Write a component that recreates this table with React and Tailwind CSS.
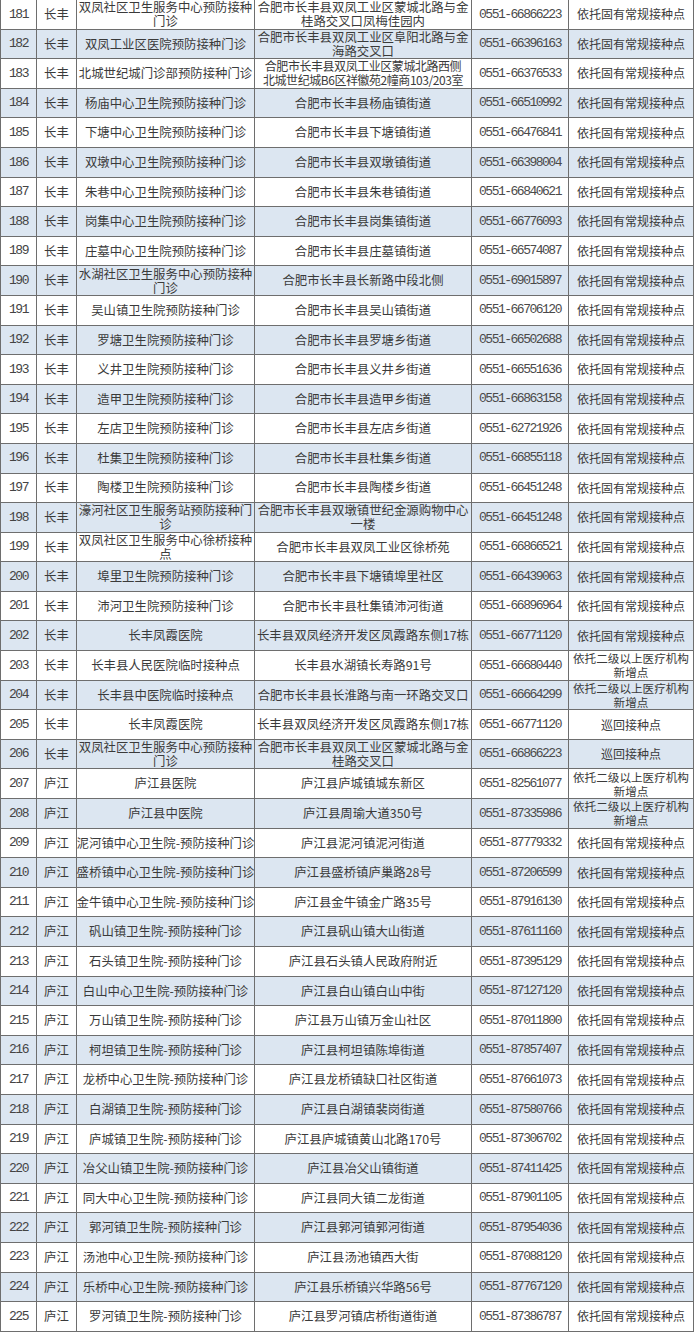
import React from 'react';

const T1 = '依托固有常规接种点';
const T2 = ['依托二级以上医疗机构', '新增点'];
const T3 = '巡回接种点';

const rows = [
    [181, '长丰', ['双凤社区卫生服务中心预防接种', '门诊'], ['合肥市长丰县双凤工业区蒙城北路与金', '桂路交叉口凤梅佳园内'], '0551-66866223', T1],
    [182, '长丰', '双凤工业区医院预防接种门诊', ['合肥市长丰县双凤工业区阜阳北路与金', '海路交叉口'], '0551-66396163', T1],
    [183, '长丰', '北城世纪城门诊部预防接种门诊', ['合肥市长丰县双凤工业区蒙城北路西侧', '北城世纪城B6区祥徽苑2幢商103/203室'], '0551-66376533', T1],
    [184, '长丰', '杨庙中心卫生院预防接种门诊', '合肥市长丰县杨庙镇街道', '0551-66510992', T1],
    [185, '长丰', '下塘中心卫生院预防接种门诊', '合肥市长丰县下塘镇街道', '0551-66476841', T1],
    [186, '长丰', '双墩中心卫生院预防接种门诊', '合肥市长丰县双墩镇街道', '0551-66398004', T1],
    [187, '长丰', '朱巷中心卫生院预防接种门诊', '合肥市长丰县朱巷镇街道', '0551-66840621', T1],
    [188, '长丰', '岗集中心卫生院预防接种门诊', '合肥市长丰县岗集镇街道', '0551-66776093', T1],
    [189, '长丰', '庄墓中心卫生院预防接种门诊', '合肥市长丰县庄墓镇街道', '0551-66574087', T1],
    [190, '长丰', ['水湖社区卫生服务中心预防接种', '门诊'], '合肥市长丰县长新路中段北侧', '0551-69015897', T1],
    [191, '长丰', '吴山镇卫生院预防接种门诊', '合肥市长丰县吴山镇街道', '0551-66706120', T1],
    [192, '长丰', '罗塘卫生院预防接种门诊', '合肥市长丰县罗塘乡街道', '0551-66502688', T1],
    [193, '长丰', '义井卫生院预防接种门诊', '合肥市长丰县义井乡街道', '0551-66551636', T1],
    [194, '长丰', '造甲卫生院预防接种门诊', '合肥市长丰县造甲乡街道', '0551-66863158', T1],
    [195, '长丰', '左店卫生院预防接种门诊', '合肥市长丰县左店乡街道', '0551-62721926', T1],
    [196, '长丰', '杜集卫生院预防接种门诊', '合肥市长丰县杜集乡街道', '0551-66855118', T1],
    [197, '长丰', '陶楼卫生院预防接种门诊', '合肥市长丰县陶楼乡街道', '0551-66451248', T1],
    [198, '长丰', ['濠河社区卫生服务站预防接种门', '诊'], ['合肥市长丰县双墩镇世纪金源购物中心', '一楼'], '0551-66451248', T1],
    [199, '长丰', ['双凤社区卫生服务中心徐桥接种', '点'], '合肥市长丰县双凤工业区徐桥苑', '0551-66866521', T1],
    [200, '长丰', '埠里卫生院预防接种门诊', '合肥市长丰县下塘镇埠里社区', '0551-66439063', T1],
    [201, '长丰', '沛河卫生院预防接种门诊', '合肥市长丰县杜集镇沛河街道', '0551-66896964', T1],
    [202, '长丰', '长丰凤霞医院', '长丰县双凤经济开发区凤霞路东侧17栋', '0551-66771120', T1],
    [203, '长丰', '长丰县人民医院临时接种点', '长丰县水湖镇长寿路91号', '0551-66680440', T2],
    [204, '长丰', '长丰县中医院临时接种点', '合肥市长丰县长淮路与南一环路交叉口', '0551-66664299', T2],
    [205, '长丰', '长丰凤霞医院', '长丰县双凤经济开发区凤霞路东侧17栋', '0551-66771120', T3],
    [206, '长丰', ['双凤社区卫生服务中心预防接种', '门诊'], ['合肥市长丰县双凤工业区蒙城北路与金', '桂路交叉口'], '0551-66866223', T3],
    [207, '庐江', '庐江县医院', '庐江县庐城镇城东新区', '0551-82561077', T2],
    [208, '庐江', '庐江县中医院', '庐江县周瑜大道350号', '0551-87335986', T2],
    [209, '庐江', '泥河镇中心卫生院-预防接种门诊', '庐江县泥河镇泥河街道', '0551-87779332', T1],
    [210, '庐江', '盛桥镇中心卫生院-预防接种门诊', '庐江县盛桥镇庐巢路28号', '0551-87206599', T1],
    [211, '庐江', '金牛镇中心卫生院-预防接种门诊', '庐江县金牛镇金广路35号', '0551-87916130', T1],
    [212, '庐江', '矾山镇卫生院-预防接种门诊', '庐江县矾山镇大山街道', '0551-87611160', T1],
    [213, '庐江', '石头镇卫生院-预防接种门诊', '庐江县石头镇人民政府附近', '0551-87395129', T1],
    [214, '庐江', '白山中心卫生院-预防接种门诊', '庐江县白山镇白山中街', '0551-87127120', T1],
    [215, '庐江', '万山镇卫生院-预防接种门诊', '庐江县万山镇万金山社区', '0551-87011800', T1],
    [216, '庐江', '柯坦镇卫生院-预防接种门诊', '庐江县柯坦镇陈埠街道', '0551-87857407', T1],
    [217, '庐江', '龙桥中心卫生院-预防接种门诊', '庐江县龙桥镇缺口社区街道', '0551-87661073', T1],
    [218, '庐江', '白湖镇卫生院-预防接种门诊', '庐江县白湖镇裴岗街道', '0551-87580766', T1],
    [219, '庐江', '庐城镇卫生院-预防接种门诊', '庐江县庐城镇黄山北路170号', '0551-87306702', T1],
    [220, '庐江', '冶父山镇卫生院-预防接种门诊', '庐江县冶父山镇街道', '0551-87411425', T1],
    [221, '庐江', '同大中心卫生院-预防接种门诊', '庐江县同大镇二龙街道', '0551-87901105', T1],
    [222, '庐江', '郭河镇卫生院-预防接种门诊', '庐江县郭河镇郭河街道', '0551-87954036', T1],
    [223, '庐江', '汤池中心卫生院-预防接种门诊', '庐江县汤池镇西大街', '0551-87088120', T1],
    [224, '庐江', '乐桥中心卫生院-预防接种门诊', '庐江县乐桥镇兴华路56号', '0551-87767120', T1],
    [225, '庐江', '罗河镇卫生院-预防接种门诊', '庐江县罗河镇店桥街道街道', '0551-87386787', T1],
];

// a string is one line, an array is lines broken as in the sheet
const Cell = ({ value, lineClass = '' }) => (
    <div className="flex flex-col items-center justify-center border-r border-[#6e6e6e]">
        {Array.isArray(value)
            ? value.map((line, i) => (
                  <div key={i} className={`whitespace-nowrap leading-[14px] ${lineClass}`}>{line}</div>
              ))
            : <div className={`whitespace-nowrap ${lineClass}`}>{value}</div>}
    </div>
);

export default function App() {
    return (
        <div className="w-[695px] h-[1333px] bg-white overflow-hidden text-[#3a3a3a] font-['Noto_Sans_CJK_SC',sans-serif]">
            <div className="border-l border-[#6e6e6e] w-[694px]">
                {rows.map(([num, area, name, addr, phone, kind]) => (
                    <div
                        key={num}
                        className={`grid grid-cols-[36px_40px_178px_217px_97px_125px] h-[29.6px] border-b border-[#6e6e6e] text-[12.4px] ${num % 2 === 0 ? 'bg-[#dce6f1]' : 'bg-white'}`}
                    >
                        <Cell value={String(num)} lineClass="font-['Liberation_Mono',monospace] text-[13px] tracking-[-1.4px] text-[#444]" />
                        <Cell value={area} />
                        <Cell value={name} />
                        <Cell value={addr} lineClass={num === 183 ? 'text-[12px] tracking-[-0.45px]' : ''} />
                        <Cell value={phone} lineClass="font-['Liberation_Mono',monospace] text-[13px] tracking-[-1.5px] text-[#4a4a4a]" />
                        <Cell value={kind} lineClass={Array.isArray(kind) ? 'text-[11.6px]' : 'text-[12px]'} />
                    </div>
                ))}
            </div>
        </div>
    );
}
